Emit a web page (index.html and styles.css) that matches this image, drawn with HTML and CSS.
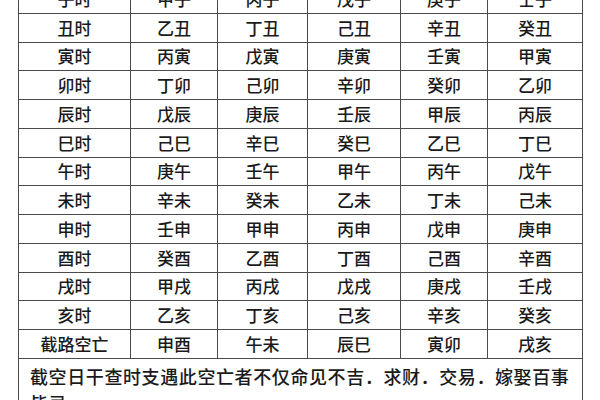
FILE: index.html
```html
<!DOCTYPE html>
<html lang="zh">
<head>
<meta charset="utf-8">
<title>截路空亡</title>
<link rel="stylesheet" href="styles.css">
</head>
<body>
<div class="page">
<table class="grid">
<colgroup>
<col class="c1"><col class="c2"><col class="c3"><col class="c4"><col class="c5"><col class="c6">
</colgroup>
<tbody>
<tr><td>子时</td><td>甲子</td><td>丙子</td><td>戊子</td><td>庚子</td><td>壬子</td></tr>
<tr><td>丑时</td><td>乙丑</td><td>丁丑</td><td>己丑</td><td>辛丑</td><td>癸丑</td></tr>
<tr><td>寅时</td><td>丙寅</td><td>戊寅</td><td>庚寅</td><td>壬寅</td><td>甲寅</td></tr>
<tr><td>卯时</td><td>丁卯</td><td>己卯</td><td>辛卯</td><td>癸卯</td><td>乙卯</td></tr>
<tr><td>辰时</td><td>戊辰</td><td>庚辰</td><td>壬辰</td><td>甲辰</td><td>丙辰</td></tr>
<tr><td>巳时</td><td>己巳</td><td>辛巳</td><td>癸巳</td><td>乙巳</td><td>丁巳</td></tr>
<tr><td>午时</td><td>庚午</td><td>壬午</td><td>甲午</td><td>丙午</td><td>戊午</td></tr>
<tr><td>未时</td><td>辛未</td><td>癸未</td><td>乙未</td><td>丁未</td><td>己未</td></tr>
<tr><td>申时</td><td>壬申</td><td>甲申</td><td>丙申</td><td>戊申</td><td>庚申</td></tr>
<tr><td>酉时</td><td>癸酉</td><td>乙酉</td><td>丁酉</td><td>己酉</td><td>辛酉</td></tr>
<tr><td>戌时</td><td>甲戌</td><td>丙戌</td><td>戊戌</td><td>庚戌</td><td>壬戌</td></tr>
<tr><td>亥时</td><td>乙亥</td><td>丁亥</td><td>己亥</td><td>辛亥</td><td>癸亥</td></tr>
<tr><td>截路空亡</td><td>申酉</td><td>午未</td><td>辰巳</td><td>寅卯</td><td>戌亥</td></tr>
<tr><td class="note" colspan="6">截空日干查时支遇此空亡者不仅命见不吉．求财．交易．嫁娶百事皆忌。</td></tr>
</tbody>
</table>
</div>
</body>
</html>
```
FILE: styles.css
```css
html, body {
  margin: 0;
  padding: 0;
  background: #ffffff;
}
.page {
  width: 600px;
  height: 400px;
  overflow: hidden;
  padding-left: 18px;
  box-sizing: border-box;
}
.grid {
  margin-top: -16px;
  border-collapse: collapse;
  table-layout: fixed;
  width: 564px;
  font-family: "Noto Sans CJK SC", "Noto Sans CJK TC", sans-serif;
  color: #1a1a1a;
}
.c1 { width: 112px; }
.c2 { width: 87px; }
.c3 { width: 90px; }
.c4 { width: 93px; }
.c5 { width: 87px; }
.c6 { width: 95px; }
.grid td {
  border: 1px solid #4a4a4a;
  height: 27.75px;
  padding: 0;
  text-align: center;
  vertical-align: middle;
  font-size: 17px;
  font-weight: 500;
  line-height: 20px;
}
.grid td.note {
  text-align: left;
  vertical-align: top;
  padding: 4px 4px 0 11px;
  font-size: 18px;
  letter-spacing: 0.6px;
  line-height: 27px;
  height: 60px;
}
```
